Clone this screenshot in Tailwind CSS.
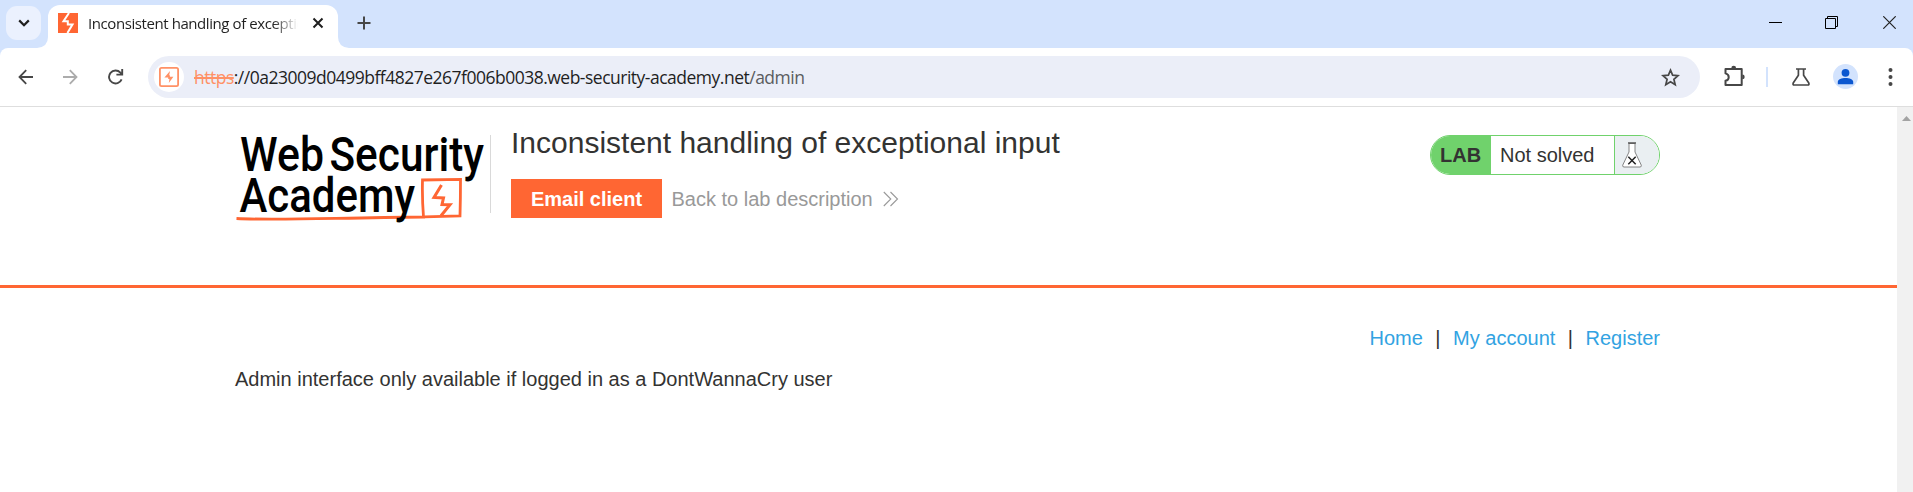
<!DOCTYPE html>
<html lang="en">
<head>
<meta charset="utf-8">
<title>Inconsistent handling of exceptional input</title>
<script src="https://cdn.jsdelivr.net/npm/@tailwindcss/browser@4"></script>
</head>
<body class="flex h-[492px] w-[1913px] flex-col overflow-hidden bg-[#d3e3fd] font-['Liberation_Sans',Arial,sans-serif]">
<!-- Tab strip -->
<header class="flex h-12 shrink-0 items-start pl-1.5">
  <button class="mt-1.5 flex h-[34px] w-[35px] items-center justify-center rounded-[11px] bg-[#ebf1fe]">
    <svg class="h-3 w-3" viewBox="0 0 12 12" fill="none" stroke="#1f1f1f" stroke-width="2.2"><path d="M1.2 3.4 6 8.2l4.8-4.8"/></svg>
  </button>
  <svg class="mt-[37px] -ml-[4px] h-[11px] w-[11px] shrink-0" viewBox="0 0 11 11"><path d="M11 0v11H0Q11 10 11 0Z" fill="#fff"/></svg>
  <div class="mt-[5px] flex h-[43px] w-[290px] items-center rounded-t-[12px] bg-white pb-[7px] pl-2.5">
    <svg class="h-5 w-5 shrink-0" viewBox="0 0 20 20"><path d="M0 0h20v20H0Z" fill="#ff6633"/><path d="M11 0 5.500 8.200h4.300v3.300h4.700L9.400 20" fill="none" stroke="#fff" stroke-width="2"/></svg>
    <span class="ml-2.5 w-[210px] overflow-hidden whitespace-nowrap bg-gradient-to-r from-[#1f1f1f] from-88% to-transparent to-100% bg-clip-text font-['Open_Sans',sans-serif] text-[15px] leading-6 font-normal tracking-[-0.42px] text-transparent">Inconsistent handling of exceptional</span>
    <svg class="ml-[14px] h-3 w-3 shrink-0" viewBox="0 0 12 12" stroke="#1f1f1f" stroke-width="2"><path d="m1.5 1.5 9 9m0-9-9 9"/></svg>
  </div>
  <svg class="mt-[37px] h-[11px] w-[11px] shrink-0" viewBox="0 0 11 11"><path d="M0 0v11h11Q0 10 0 0Z" fill="#fff"/></svg>
  <svg class="mt-4 ml-[8px] h-[14px] w-[14px]" viewBox="0 0 14 14" stroke="#474747" stroke-width="2"><path d="M7 .5v13M.5 7h13"/></svg>
  <svg class="mt-[15px] ml-auto h-[15px] w-[13px]" viewBox="0 0 13 15"><path d="M0 7h13v1H0z" fill="#000"/></svg>
  <svg class="mt-[16px] ml-[43px] h-[13px] w-[13px]" viewBox="0 0 13 13" fill="none" stroke="#000"><path d="M.5 2.5h10v10H.5zM2.5 2.5v-2h10v10h-2"/></svg>
  <svg class="mt-[16px] mr-[17px] ml-[45px] h-[13px] w-[13px]" viewBox="0 0 13 13" stroke="#222" stroke-width="1.2"><path d="m.3.3 12.4 12.4m0-12.4L.3 12.7"/></svg>
</header>
<!-- Toolbar -->
<div class="flex h-[59px] shrink-0 items-start rounded-t-[8px] border-b border-[#dedede] bg-white pl-[18px]">
  <svg class="mt-[21px] h-4 w-[15px]" viewBox="0 0 15 16" fill="none" stroke="#474747" stroke-width="1.800"><path d="M15 8H1.7M8.2 1.2 1.5 8l6.7 6.8"/></svg>
  <svg class="mt-[21px] ml-[30px] h-4 w-[15px]" viewBox="0 0 15 16" fill="none" stroke="#acacac" stroke-width="1.800"><path d="M0 8h13.3M6.8 1.2 13.5 8l-6.7 6.8"/></svg>
  <svg class="mt-[21px] ml-[29px] h-4 w-[17px]" viewBox="0 0 17 16" fill="none" stroke="#474747" stroke-width="1.900"><path d="M14.6 10.3A6.5 6.5 0 1 1 13.4 3.6L15 5.2M15.2 0v5.6H9.4"/></svg>
  <div class="mt-2 ml-6 flex h-[42px] w-[1552px] shrink-0 items-center rounded-full bg-[#ebeef8] pl-1.5">
    <span class="flex h-[30px] w-[30px] shrink-0 items-center justify-center rounded-full bg-white">
      <svg class="h-5 w-5" viewBox="0 0 20 20"><rect x=".9" y=".9" width="18.2" height="18.2" rx="1.6" fill="none" stroke="#ff9166" stroke-width="1.8"/><path d="M11 4 5.400 10.400h3.800v1.700h1.200L9.800 16l4.600-6.300h-3.500V8.200H10.200Z" fill="#ff9166"/></svg>
    </span>
    <span class="ml-2.5 whitespace-nowrap font-['Open_Sans',sans-serif] text-[17.5px] leading-6 tracking-[-0.5px] text-[#1f1f1f]"><span class="text-[#ff9166] line-through decoration-2">https</span>://0a23009d0499bff4827e267f006b0038.web-security-academy.net<span class="text-[#5a5c60]">/admin</span></span>
    <svg class="mr-5 ml-auto h-[19px] w-[19px]" viewBox="0 0 19 19" fill="none" stroke="#474747" stroke-width="1.7"><path d="m9.5 2.2 2.1 5 5.4.5-4.1 3.6 1.3 5.4-4.7-2.9-4.7 2.9 1.3-5.4L2 7.7l5.4-.5Z"/></svg>
  </div>
  <svg class="mt-[17px] ml-[23px] h-[22px] w-[22px] shrink-0" viewBox="0 0 22 22"><path d="M2.500 4h16.200v16H2.500v-4.200c4.300-1.200 4.300-6.100 0-7.400Z" fill="none" stroke="#474747" stroke-width="2" stroke-linejoin="round"/><path d="M8.300 3.200a2.400 2.400 0 0 1 4.800 0ZM19.300 9.500a2.400 2.400 0 0 1 0 4.800Z" fill="#474747"/></svg>
  <span class="mt-[19px] ml-[21px] h-5 w-0.5 bg-[#d3e3fd]"></span>
  <svg class="mt-5 ml-[23.5px] h-[18px] w-[18px]" viewBox="0 0 18 18" fill="none" stroke="#474747" stroke-width="1.7" stroke-linejoin="round"><path d="M4 1h10M6.4 1v6.2L1.2 15q-.6 2 1 2h13.6q1.6 0 1-2L11.600 7.200V1"/></svg>
  <svg class="mt-4 ml-[23.5px] h-[25px] w-[25px]" viewBox="0 0 25 25"><circle cx="12.5" cy="12.5" r="12.5" fill="#d3e3fd"/><circle cx="12.5" cy="8.8" r="3.9" fill="#0b57d0"/><path d="M4.8 20.2v-2.4c0-5.2 15.4-5.2 15.4 0v2.4Z" fill="#0b57d0"/></svg>
  <svg class="mt-[19px] ml-[30px] h-5 w-[5px]" viewBox="0 0 5 20" fill="#474747"><circle cx="2.5" cy="3" r="2"/><circle cx="2.5" cy="10" r="2"/><circle cx="2.5" cy="17" r="2"/></svg>
</div>
<!-- Page -->
<div class="flex min-h-0 flex-1 bg-white">
  <main class="flex-1 text-xl text-[#333332]">
    <section class="h-[181px] border-b-[3px] border-[#ff6633] pl-[235px]">
      <div class="flex w-[1425px] pt-6">
        <svg class="h-[100px] w-[256px] shrink-0" viewBox="235 131 256 100" font-family="Roboto, sans-serif" font-weight="500" font-size="47.5" fill="#000">
          <path d="M236.500 218.500c40 2 90-.5 187-1.500q-1.500-19-1-37l38-.600q0 18-.5 36.600l-35.500.8" fill="none" stroke="#ff6633" stroke-width="2.800"/>
          <path d="m441.500 185-7.500 12.500 9.500.500-1.500 6.500 8 .200-9 11" fill="none" stroke="#ff6633" stroke-width="3"/>
          <text x="240" y="171" textLength="84" lengthAdjust="spacingAndGlyphs">Web</text>
          <text x="329.500" y="171" textLength="154.500" lengthAdjust="spacingAndGlyphs">Security</text>
          <text x="239.500" y="211.500" textLength="175.500" lengthAdjust="spacingAndGlyphs">Academy</text>
          <path d="M490.500 135v78" stroke="#d9d9d9" stroke-width="1"/>
        </svg>
        <div class="ml-5">
          <h2 class="-mt-[6px] text-[30px] leading-[36px]">Inconsistent handling of exceptional input</h2>
          <div class="mt-[18px] flex items-center">
            <a class="flex h-[39px] w-[151px] items-center justify-center bg-[#ff6633] font-bold text-white">Email client</a>
            <a class="ml-[9.5px] text-[#999]">Back to lab description</a>
            <svg class="ml-2.5 h-4 w-4" viewBox="0 0 16 16" fill="none" stroke="#999" stroke-width="1.1"><path d="m.8 1 7 7-7 7M7.500 1l7 7-7 7"/></svg>
          </div>
        </div>
        <div class="mt-1 ml-auto flex h-10 w-[230px] overflow-hidden rounded-[20px] border border-[#70d26c] bg-white">
          <strong class="flex w-[60px] items-center bg-[#70d26c] pl-[9px]">LAB</strong>
          <span class="flex w-[124px] items-center border-r border-[#70d26c] pl-[9px]">Not solved</span>
          <span class="flex flex-1 items-center bg-[#eaeff2] pl-[7px]">
            <svg class="h-[26px] w-5" viewBox="0 0 20 26"><path d="M7 1.500h6v8.500l6.300 13.200q.3 1.800-1.300 1.800H2q-1.600 0-1.300-1.800L7 10Z" fill="#fff" stroke="#777" stroke-width=".9"/><path d="M6 1h8" stroke="#555" stroke-width="1.400"/><path d="m6.300 14.800 7.400 7.400m0-7.400-7.400 7.400" stroke="#222" stroke-width="1.500"/></svg>
          </span>
        </div>
      </div>
    </section>
    <section class="ml-[235px] w-[1425px] pt-9">
      <nav class="flex justify-end gap-[12.5px] leading-7">
        <a class="text-[#32a3e2]">Home</a><span>|</span><a class="text-[#32a3e2]">My account</a><span>|</span><a class="text-[#32a3e2]">Register</a>
      </nav>
      <p class="mt-[13px] leading-7">Admin interface only available if logged in as a DontWannaCry user</p>
    </section>
  </main>
  <aside class="flex w-4 justify-center bg-[#f1f1f1] pt-[9px] pl-[3px]">
    <svg class="h-[5px] w-[9px]" viewBox="0 0 9 5"><path d="M4.500 0 9 5H0Z" fill="#a3a3a3"/></svg>
  </aside>
</div>
</body>
</html>
